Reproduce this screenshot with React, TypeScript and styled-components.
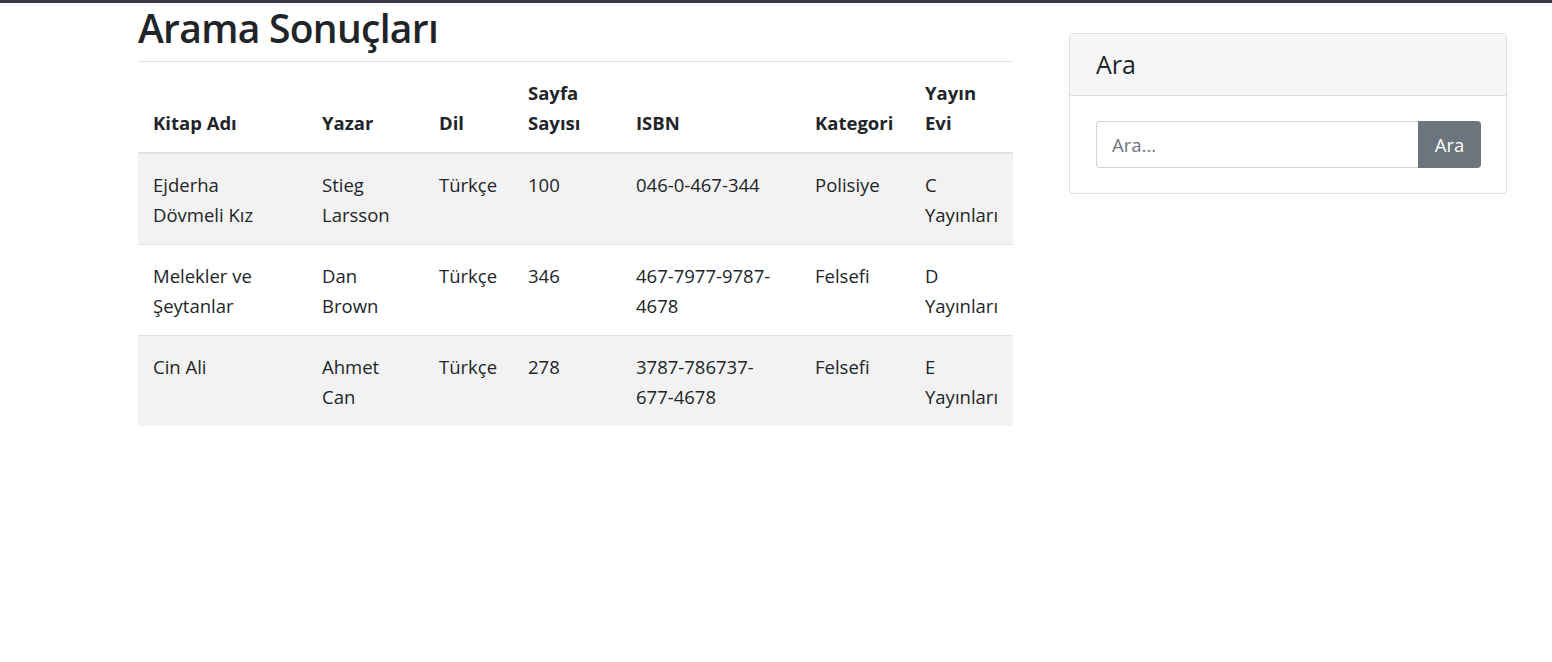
import React from "react";
import styled, { createGlobalStyle } from "styled-components";

const GlobalStyle = createGlobalStyle`
  html, body {
    margin: 0;
    padding: 0;
    background: #fff;
  }
  body {
    font-family: "Open Sans", "Noto Sans", "Liberation Sans", sans-serif;
    font-size: 18.5px;
    line-height: 30px;
    color: #212529;
  }
  * {
    box-sizing: border-box;
  }
`;

const Page = styled.div`
  border-top: 3px solid #343a40;
  min-height: 662px;
`;

const Layout = styled.div`
  display: grid;
  grid-template-columns: 875px 438px;
  column-gap: 56px;
  padding-left: 138px;
  align-items: start;
`;

const Title = styled.h1`
  margin: 0 0 10px;
  padding-top: 1px;
  font-size: 39px;
  line-height: 47px;
  font-weight: 600;
  letter-spacing: -0.7px;
`;

const Table = styled.table`
  width: 100%;
  border-collapse: collapse;
  table-layout: fixed;

  tbody tr + tr td {
    border-top: 1px solid #dee2e6;
  }
`;

const HeadCell = styled.th`
  text-align: left;
  vertical-align: bottom;
  font-weight: 700;
  padding: 16px 15px 14px;
  border-top: 1px solid #dee2e6;
  border-bottom: 2px solid #dee2e6;
`;

const Row = styled.tr<{ $striped: boolean }>`
  background: ${(p) => (p.$striped ? "#f2f2f2" : "#fff")};
`;

const Cell = styled.td`
  vertical-align: top;
  padding: 16px 15px 14px;
`;

const Card = styled.div`
  margin-top: 30px;
  border: 1px solid #dfdfdf;
  border-radius: 4px;
  overflow: hidden;
`;

const CardHeader = styled.div`
  background: #f6f6f6;
  border-bottom: 1px solid #dfdfdf;
  padding: 15px 26px;
  font-size: 25px;
  line-height: 31px;
  font-weight: 500;
`;

const CardBody = styled.div`
  padding: 25px 25px 25px 26px;
`;

const SearchGroup = styled.div`
  display: flex;
  height: 47px;
`;

const SearchInput = styled.input`
  flex: 1;
  min-width: 0;
  height: 100%;
  border: 1px solid #ced4da;
  border-right: none;
  border-radius: 4px 0 0 4px;
  padding: 0 15px;
  font: inherit;
  color: #495057;
  outline: none;
  &::placeholder {
    color: #6c757d;
  }
`;

const SearchButton = styled.button`
  width: 63px;
  height: 100%;
  border: none;
  border-radius: 0 4px 4px 0;
  background: #6c757d;
  color: #fff;
  font: inherit;
  cursor: pointer;
`;

type Book = {
  name: string;
  author: string;
  lang: string;
  pages: number;
  isbn: string;
  category: string;
  publisher: string;
};

const books: Book[] = [
  {
    name: "Ejderha Dövmeli Kız",
    author: "Stieg Larsson",
    lang: "Türkçe",
    pages: 100,
    isbn: "046-0-467-344",
    category: "Polisiye",
    publisher: "C Yayınları",
  },
  {
    name: "Melekler ve Şeytanlar",
    author: "Dan Brown",
    lang: "Türkçe",
    pages: 346,
    isbn: "467-7977-9787-4678",
    category: "Felsefi",
    publisher: "D Yayınları",
  },
  {
    name: "Cin Ali",
    author: "Ahmet Can",
    lang: "Türkçe",
    pages: 278,
    isbn: "3787-786737-677-4678",
    category: "Felsefi",
    publisher: "E Yayınları",
  },
];

const columns = [
  { label: "Kitap Adı", width: 169 },
  { label: "Yazar", width: 117 },
  { label: "Dil", width: 89 },
  { label: "Sayfa Sayısı", width: 108 },
  { label: "ISBN", width: 179 },
  { label: "Kategori", width: 110 },
  { label: "Yayın Evi", width: 103 },
];

const App: React.FC = () => {
  return (
    <Page>
      <GlobalStyle />
      <Layout>
        <div>
          <Title>Arama Sonuçları</Title>
          <Table>
            <colgroup>
              {columns.map((c) => (
                <col key={c.label} style={{ width: c.width }} />
              ))}
            </colgroup>
            <thead>
              <tr>
                {columns.map((c) => (
                  <HeadCell key={c.label}>{c.label}</HeadCell>
                ))}
              </tr>
            </thead>
            <tbody>
              {books.map((b, i) => (
                <Row key={b.isbn} $striped={i % 2 === 0}>
                  <Cell>{b.name}</Cell>
                  <Cell>{b.author}</Cell>
                  <Cell>{b.lang}</Cell>
                  <Cell>{b.pages}</Cell>
                  <Cell>{b.isbn}</Cell>
                  <Cell>{b.category}</Cell>
                  <Cell>{b.publisher}</Cell>
                </Row>
              ))}
            </tbody>
          </Table>
        </div>
        <Card>
          <CardHeader>Ara</CardHeader>
          <CardBody>
            <SearchGroup>
              <SearchInput type="text" placeholder="Ara..." />
              <SearchButton type="button">Ara</SearchButton>
            </SearchGroup>
          </CardBody>
        </Card>
      </Layout>
    </Page>
  );
};

export default App;
